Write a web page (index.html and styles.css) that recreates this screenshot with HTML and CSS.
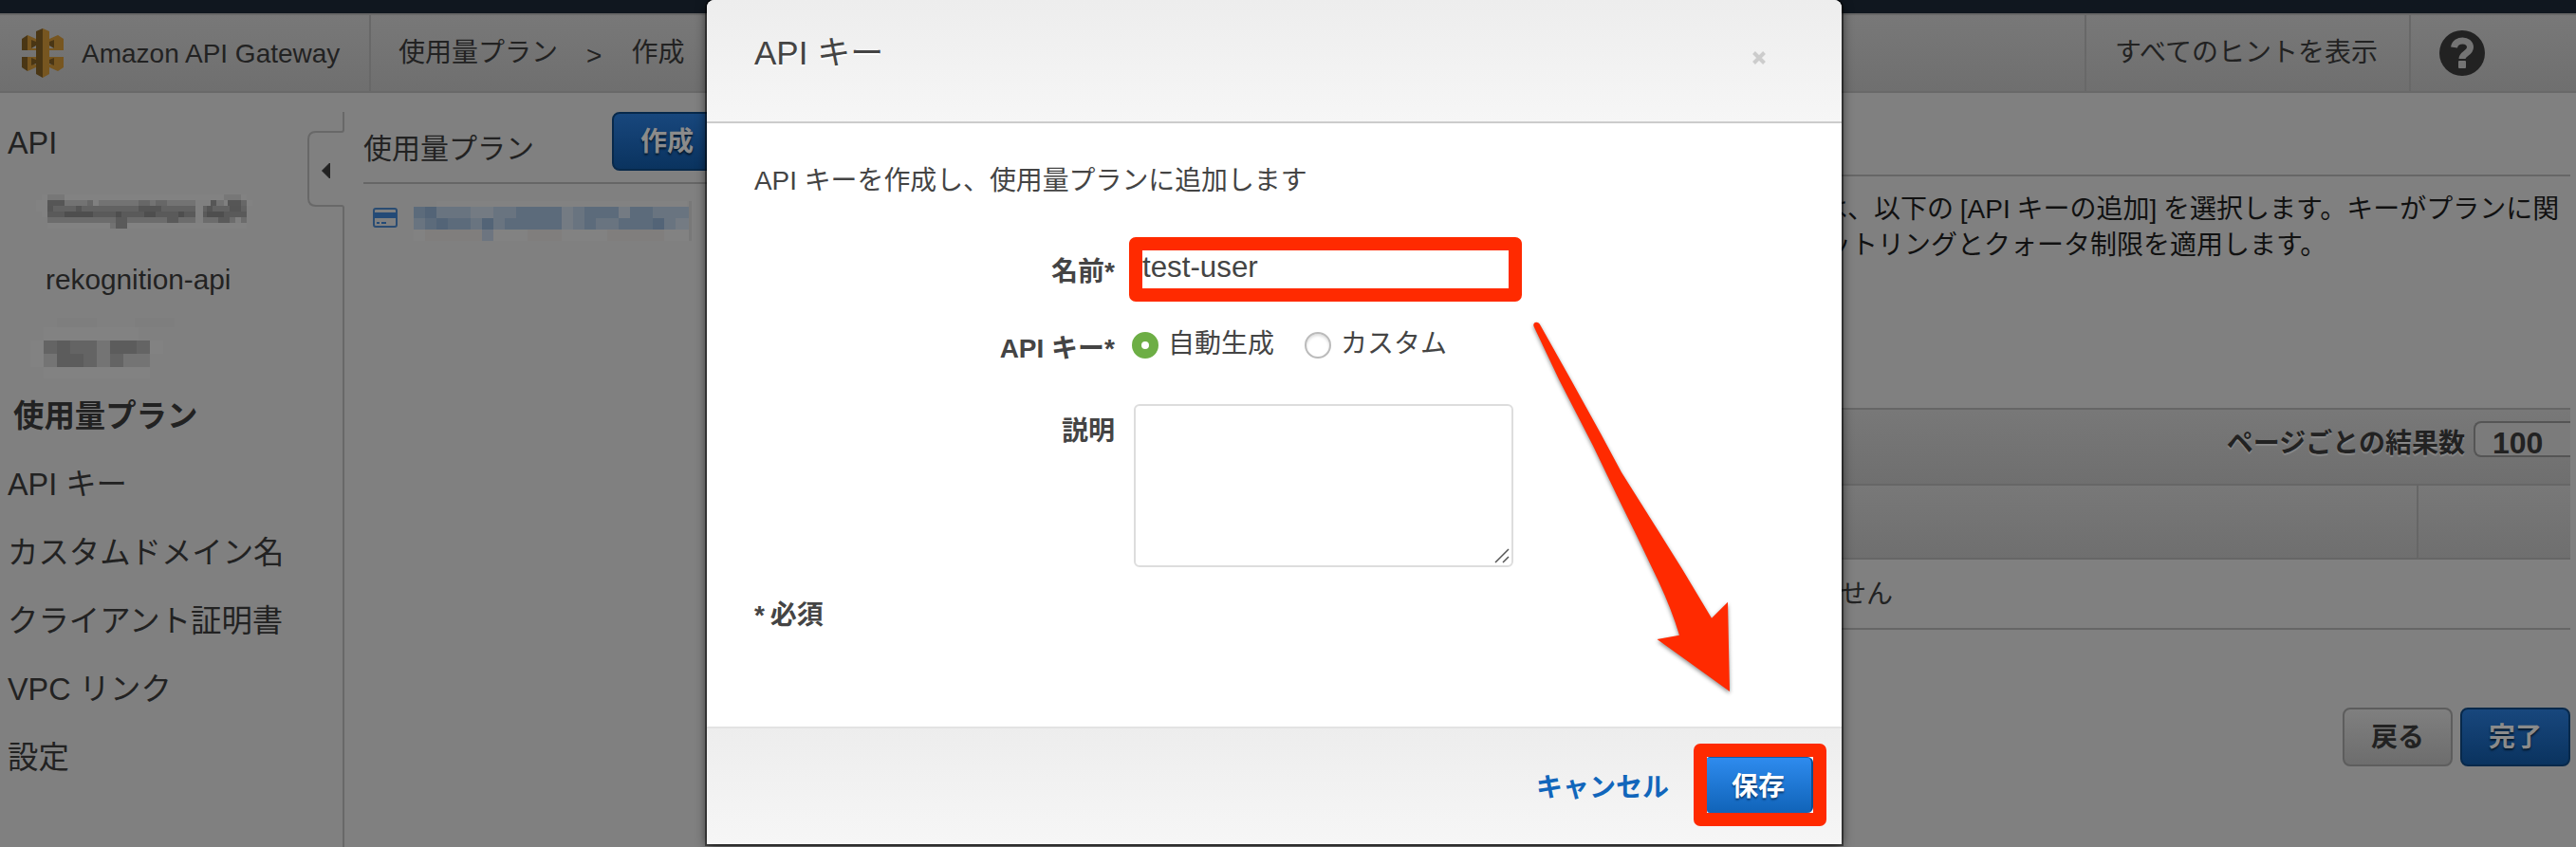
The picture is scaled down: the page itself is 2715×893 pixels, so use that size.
FILE: index.html
```html
<!DOCTYPE html>
<html lang="ja">
<head>
<meta charset="utf-8">
<title>Amazon API Gateway</title>
<link rel="stylesheet" href="styles.css">
</head>
<body>
<div class="topbar"></div>
<header class="header">
  <div class="brand">
    <svg class="logo" width="44" height="52" viewBox="0 0 44 52">
      <path fill="#4a3614" d="M0 11l6-4v16H0zM0 30h6v15l-6-4z"/>
      <path fill="#775620" d="M6 7l9 4v5h-5v5h5v2H6zM38 7l-9 4v5h5v5h-5v2h9zM6 30h9v3h-5v5h5v3l-9 4zM38 30h-9v3h5v5h-5v3l9 4z"/>
      <path fill="#775620" d="M38 7l6 4v12h-6zM38 30h6v11l-6 4z"/>
      <path fill="#4a3614" d="M10 12l5 2v4l-5 3zM34 12l-5 2v4l5 3zM10 39l5-2v-4l-5-2zM34 39l-5-2v-4l5-2z"/>
      <path fill="#4a3614" d="M15 3l7-3v52l-7-4z"/>
      <path fill="#775620" d="M22 0l7 3v45l-7 4z"/>
    </svg>
    <span>Amazon API Gateway</span>
  </div>
  <nav class="crumbs"><span>使用量プラン</span><span class="sep">&gt;</span><span>作成</span></nav>
  <div class="hints">すべてのヒントを表示</div>
  <div class="help">
    <svg width="48" height="48" viewBox="0 0 48 48">
      <circle cx="24" cy="24" r="24" fill="#222"/>
      <path d="M15.500 18C17 8.500 32.500 8.500 32.500 18c0 6-8.500 6.500-8.500 12" fill="none" stroke="#747474" stroke-width="7"/>
      <rect x="20" y="32" width="8" height="8" rx="1" fill="#747474"/>
    </svg>
  </div>
</header>

<main class="main">
  <aside class="sidebar">
    <ul class="nav">
      <li>API</li>
      <li class="sub">
        <svg width="230" height="48" viewBox="0 0 230 48" fill="none" stroke-width="6">
          <path stroke="#828282" d="M7 9h216M1 15h12M1 21h12M7 27h6M229 15h-6M13 39h210"/>
          <path stroke="#777" d="M13 9h18M199 9h18"/>
          <path stroke="#737373" d="M31 15h24m12 0h102m18 0h12"/>
          <path stroke="#565656" d="M13 15h18m154 0h6m12 0h14"/>
          <path stroke="#676767" d="M55 15h6m48 0h6m12 0h12m-24 0h6M217 15h6"/>
          <path stroke="#626262" d="M13 21h156m8 0h46"/>
          <path stroke="#555" d="M13 21h6m24 0h6m60 0h24m48 0h6m18 0h12"/>
          <path stroke="#5a5a5a" d="M13 27h156m8 0h46"/>
          <path stroke="#4e4e4e" d="M31 27h30m24 0h6m24 0h12m24 0h6m24 0h18"/>
          <path stroke="#6c6c6c" d="M13 33h156m8 0h46"/>
          <path stroke="#5a5a5a" d="M85 33h12m42 0h12m42 0h12M85 39h12"/>
          <path stroke="#727272" d="M79 39h6"/>
          <path stroke="#7f7f7f" d="M211 33h6"/>
        </svg>
      </li>
      <li class="sub latin">rekognition-api</li>
      <li class="sub">
        <svg class="short" width="154" height="64" viewBox="0 0 154 64" shape-rendering="crispEdges">
          <path fill="#7e7e7e" d="M28 0h42v10H28zM110 0h42v10h-42z"/>
          <path fill="#828282" d="M14 10h100v14H14zM0 24h14v28H0zM14 52h112v12H14zM126 24h14v14h-14z"/>
          <path fill="#646464" d="M14 24h56v14H14z"/>
          <path fill="#747474" d="M14 38h14v14H14zM70 24h14v28H70zM98 38h28v14H98z"/>
          <path fill="#5c5c5c" d="M28 24h14v28H28zM42 38h14v14H42zM84 24h28v14H84z"/>
          <path fill="#646464" d="M56 38h14v14H56zM84 38h14v14H84zM112 24h14v14h-14z"/>
        </svg>
      </li>
      <li class="current">使用量プラン</li>
      <li>API キー</li>
      <li>カスタムドメイン名</li>
      <li>クライアント証明書</li>
      <li>VPC リンク</li>
      <li>設定</li>
    </ul>
    <svg class="rail" width="42" height="775" viewBox="0 0 42 775" fill="none">
      <path d="M40 0v19q0 2-2 2H11q-8 0-8 8v62q0 8 8 8h27q2 0 2 2v674" stroke="#686868" stroke-width="2"/>
      <path d="M17.500 62l8-8v16z" fill="#222" stroke="#222"/>
    </svg>
  </aside>

  <section class="plans">
    <div class="plans-head"><h1>使用量プラン</h1><button class="btn primary dim">作成</button></div>
    <div class="plan">
      <svg width="26" height="22" viewBox="0 0 26 22">
        <rect x="1" y="1" width="24" height="19" rx="2" fill="none" stroke="#2a4c72" stroke-width="2"/>
        <path fill="#234a77" d="M1 5h24v6H1zM4 15h3v2H4zM9 15h5v2H9z"/>
      </svg>
      <svg width="294" height="48" viewBox="0 0 294 48" shape-rendering="crispEdges">
        <path fill="#828282" d="M24 0h264v6H24zM0 30h290v12H0z"/>
        <path fill="#807e7d" d="M12 30h60v12H12zM120 30h36v12h-36zM204 30h60v12h-60z"/>
        <path fill="#697480" d="M0 6h290v24H0z"/>
        <path fill="#5c6b7b" d="M0 6h24v12H0zM108 6h48v12h-48zM180 6h36v12h-36zM228 6h24v12h-24zM12 18h48v12H12zM96 18h60v12H96zM180 18h12v12h-12zM216 18h36v12h-36z"/>
        <path fill="#536477" d="M12 6h12v12H12zM24 18h12v12H24zM72 18h12v12H72zM252 18h12v12h-12z"/>
        <path fill="#747b83" d="M60 6h24v12H60zM156 6h12v24h-12zM216 6h12v12h-12zM276 18h14v12h-14z"/>
        <path fill="#6d7580" d="M72 30h12v12H72z"/>
        <path fill="#787878" d="M290 0h3v42h-3z"/>
      </svg>
    </div>
  </section>

  <section class="detail">
    <div class="detail-head"></div>
    <p class="lead"><span>は、以下の [API キーの追加] を選択します。キーがプランに関</span><span class="second">ットリングとクォータ制限を適用します。</span></p>
    <div class="table">
      <div class="toolbar"><span>ページごとの結果数</span><div class="count">100</div></div>
      <div class="thead"><div></div><div></div></div>
      <div class="empty">せん</div>
    </div>
    <div class="actions"><button class="btn plain">戻る</button><button class="btn primary dim">完了</button></div>
  </section>
</main>

<div class="modal" role="dialog">
  <div class="modal-head">
    <h2>API キー</h2>
    <svg class="close" width="14" height="14" viewBox="0 0 14 14"><path d="M1.500 1.500l11 11M12.500 1.500l-11 11" stroke="#ccc" stroke-width="4"/></svg>
  </div>
  <div class="modal-body">
    <p>API キーを作成し、使用量プランに追加します</p>
    <div class="row name"><label>名前*</label><div class="callout field"><div class="value">test-user</div></div></div>
    <div class="row key"><label>API キー*</label>
      <div class="radios"><i class="radio on"></i><span>自動生成</span><i class="radio"></i><span>カスタム</span></div>
    </div>
    <div class="row desc"><label>説明</label>
      <div class="area"><svg width="16" height="16" viewBox="0 0 16 16"><path d="M1 15L15 1M9 15l6-6" stroke="#555" stroke-width="1.500"/></svg></div>
    </div>
    <div class="required">* 必須</div>
  </div>
  <div class="modal-foot"><a>キャンセル</a><div class="callout save"><button>保存</button></div></div>
</div>

<svg class="arrow" width="220" height="400" viewBox="1610 335 220 400">
  <path fill="#ff2a00" d="M1616.500 344C1615 339 1621.500 338 1623.500 343L1655.500 400L1687 457L1709 498L1748 560L1773 600L1804 651.700L1821 634.700L1823 729L1746.500 674L1770 669.700Q1762 643 1748 613L1726 567L1703 520L1679 470L1643 400Z"/>
</svg>
</body>
</html>
```
FILE: styles.css
```css
* { box-sizing: border-box; }
body {
  margin: 0; width: 2715px; height: 893px; overflow: hidden; position: relative;
  background: #808080; color: #222;
  font: 28px/40px "Liberation Sans", "Noto Sans CJK JP", sans-serif;
}
h1, h2, p, ul { margin: 0; padding: 0; font-weight: normal; }
svg { display: block; flex: none; }
button { font: inherit; font-weight: bold; padding: 2px 0 0; }

.topbar { height: 14px; background: #10171f; }
.header {
  height: 84px; display: flex; border-top: 2px solid #686868; border-bottom: 2px solid #696969;
  background: linear-gradient(#787878, #6f6f6f); white-space: nowrap;
}
.header > div, .crumbs { display: flex; align-items: center; }
.brand { width: 391px; padding-left: 23px; gap: 19px; border-right: 2px solid #686868; }
.brand span { padding-top: 1px; }
.crumbs { flex: 1; padding-left: 29px; }
.crumbs .sep { margin: 0 31px 0 30px; padding-top: 5px; }
.hints { width: 344px; padding-left: 30px; border-left: 2px solid #686868; border-right: 2px solid #686868; }
.help { width: 174px; padding-left: 30px; }

.main { height: 795px; display: flex; }
.sidebar { width: 364px; display: flex; padding-top: 16px; }
.nav { width: 322px; list-style: none; font-size: 32.4px; white-space: nowrap; }
.nav li { height: 72px; padding: 1px 0 0 8px; display: flex; align-items: center; }
.nav .sub { padding-left: 37px; }
.nav .latin { padding-left: 48px; font-size: 29.8px; }
.nav .short { margin-left: -5px; }
.nav .current { font-weight: bold; padding-left: 14px; }
.rail { margin-top: 4px; }

.plans { width: 381px; padding: 20px 0 0 19px; }
.plans-head { height: 76px; width: 378px; display: flex; justify-content: space-between; border-bottom: 2px solid #666; white-space: nowrap; }
.plans-head h1 { font-size: 30px; padding-top: 19px; }
.plan { display: flex; padding: 18px 0 0 10px; gap: 17px; align-items: flex-start; }
.plan svg:first-child { margin-top: 7px; }

.btn { height: 62px; width: 116px; border-radius: 8px; }
.primary.dim { color: #8b8b8b; background: linear-gradient(#18477d, #0a335f); border: 2px solid #08294b; text-shadow: 0 2px 2px #04182c; }
.plain { color: #222; background: linear-gradient(#7f7f7f, #6d6d6d); border: 2px solid #5d5d5d; }

.detail { width: 1964px; padding-left: 1174px; display: flex; flex-direction: column; }
.detail > * { width: 790px; flex: none; }
.detail-head { height: 88px; border-bottom: 2px solid #666; }
.lead { color: #111; height: 244px; padding-top: 16px; line-height: 38px; white-space: nowrap; word-spacing: -1px; }
.lead span { display: block; }
.lead .second { padding-left: 4px; }
.table { border-top: 2px solid #666; border-bottom: 2px solid #666; }
.toolbar {
  height: 80px; display: flex; justify-content: flex-end; background: linear-gradient(#787878, #6f6f6f);
  border-bottom: 2px solid #666; font-weight: bold; text-shadow: 0 2px 1px #8a8a8a; padding-top: 12px; gap: 9px;
}
.toolbar > span { padding-top: 4px; }
.count {
  width: 102px; height: 38px; border: 2px solid #555; border-right: 0; border-radius: 8px 0 0 8px;
  background: #7b7b7b; font-size: 32px; line-height: 43px; padding-left: 18px; text-shadow: none;
}
.thead { height: 78px; display: flex; justify-content: flex-end; background: linear-gradient(#787878, #6f6f6f); border-bottom: 2px solid #666; }
.thead div:last-child { width: 162px; border-left: 2px solid #666; }
.empty { height: 72px; line-height: 73px; padding-left: 20px; }
.actions { display: flex; justify-content: flex-end; gap: 8px; padding-top: 82px; }

.modal {
  position: absolute; left: 745px; top: 0; width: 1196px; height: 890px; background: #fff; color: #444;
  border-radius: 8px 8px 0 0; box-shadow: 0 0 0 2px rgba(0,0,0,.45), 0 2px 12px rgba(0,0,0,.65); white-space: nowrap;
}
.modal-head {
  height: 130px; padding: 0 80px 17px 50px; display: flex; align-items: center; justify-content: space-between;
  background: linear-gradient(#ededed, #f6f6f6); border-bottom: 2px solid #ccc; border-radius: 8px 8px 0 0;
}
.modal-head h2 { font-size: 35px; text-shadow: 0 2px 0 #fff; }
.close { margin-top: 11px; }
.modal-body { height: 636px; padding-top: 41px; }
.modal-body p { padding-left: 50px; height: 40px; font-size: 27.9px; }
.row { display: flex; }
.row label { width: 430px; text-align: right; font-weight: bold; flex: none; }
.name { margin-top: 39px; height: 68px; }
.name label { padding-top: 17px; }
.callout { border: 14px solid #ff2a00; border-radius: 7px; }
.field { margin-left: 15px; width: 414px; height: 68px; }
.value { font-size: 31.3px; line-height: 36px; }
.key { margin-top: 26px; height: 40px; }
.key label { padding-top: 4px; }
.radios { display: flex; padding-left: 18px; }
.radios span { margin: -1px 32px 0 10px; }
.radio { width: 28px; height: 28px; margin-top: 6px; border-radius: 50%; border: 2px solid #bbb; box-shadow: inset 0 2px 3px #ddd; }
.radio.on { border: 10px solid #6dae45; background: #fff; box-shadow: none; }
.desc { margin-top: 42px; }
.desc label { padding-top: 9px; }
.area {
  width: 400px; height: 172px; margin-left: 20px; border: 2px solid #ddd; border-radius: 6px;
  display: flex; align-items: flex-end; justify-content: flex-end; padding: 2px;
}
.required { padding: 31px 0 0 50px; font-weight: bold; word-spacing: -2px; }
.modal-foot {
  height: 124px; border-top: 2px solid #e3e3e3; background: linear-gradient(#ededed, #f6f6f6);
  display: flex; justify-content: flex-end; padding: 16px 16px 0 0;
}
.modal-foot a { color: #16b; font-weight: bold; padding-top: 27px; margin-right: 26px; }
.save { width: 140px; height: 87px; background: #fff; }
.save button {
  display: block; width: 112px; height: 59px; border: 0; border-right: 2px solid #0b4d93; border-top: 1px solid #0d5db0; padding: 4px 2px 0 0;
  border-radius: 3px 6px 6px 3px; color: #fff; background: linear-gradient(#2e8bee, #1063b8); text-shadow: 0 2px 2px #083a70;
}
.arrow { position: absolute; left: 1610px; top: 335px; filter: drop-shadow(0 2px 2px rgba(0,0,0,.45)); }
```
